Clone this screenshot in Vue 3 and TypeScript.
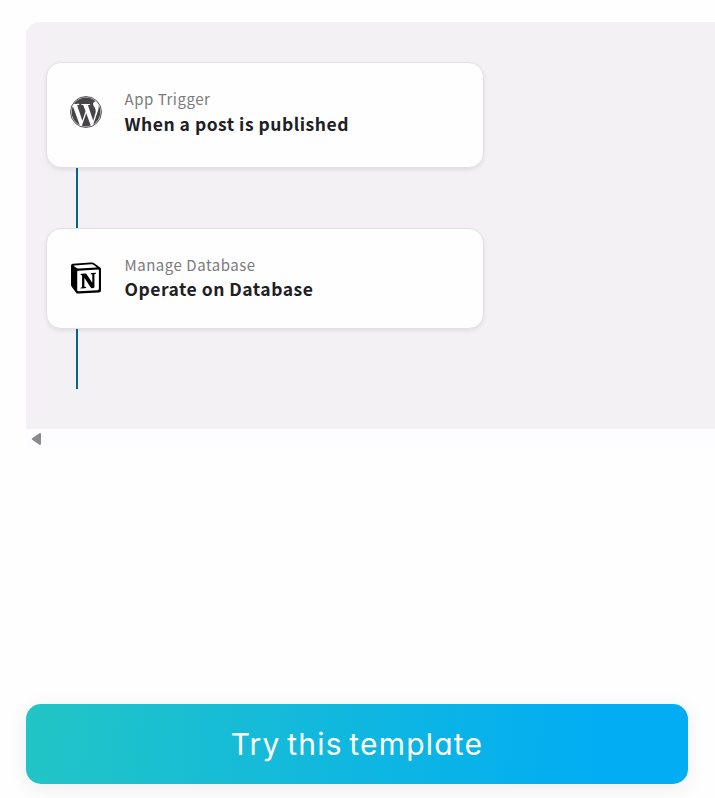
<script setup lang="ts">
interface Step {
  kind: 'wordpress' | 'notion'
  label: string
  title: string
}

const steps: Step[] = [
  { kind: 'wordpress', label: 'App Trigger', title: 'When a post is published' },
  { kind: 'notion', label: 'Manage Database', title: 'Operate on Database' },
]
</script>

<template>
  <main class="page">
    <section class="flow">
      <div v-for="step in steps" :key="step.kind" class="step">
        <article class="card" :class="step.kind">
          <svg v-if="step.kind === 'wordpress'" class="icon" viewBox="0 0 24 24" fill="#464446">
            <circle cx="12" cy="12" r="11.6" fill="none" stroke="#464446" stroke-width=".7" />
            <path d="M21.469 6.825c.84 1.537 1.318 3.3 1.318 5.175 0 3.979-2.156 7.456-5.363 9.325l3.295-9.527c.615-1.54.82-2.771.82-3.864 0-.405-.026-.78-.07-1.11m-7.981.105c.647-.03 1.232-.105 1.232-.105.582-.075.514-.93-.067-.899 0 0-1.755.135-2.88.135-1.064 0-2.85-.15-2.85-.15-.585-.03-.661.855-.075.885 0 0 .54.061 1.125.09l1.68 4.605-2.37 7.08L5.354 6.9c.649-.03 1.234-.1 1.234-.1.585-.075.516-.93-.065-.896 0 0-1.746.138-2.874.138-.2 0-.438-.008-.69-.015C4.911 3.15 8.235 1.215 12 1.215c2.809 0 5.365 1.072 7.286 2.833-.046-.003-.091-.009-.141-.009-1.06 0-1.812.923-1.812 1.914 0 .89.513 1.643 1.06 2.531.411.72.89 1.643.89 2.977 0 .915-.354 1.994-.821 3.479l-1.075 3.585-3.9-11.61zM12 22.784c-1.059 0-2.081-.153-3.048-.437l3.237-9.406 3.315 9.087c.024.053.05.101.078.149-1.12.393-2.325.609-3.582.609M1.211 12c0-1.564.336-3.05.935-4.39L7.29 21.709C3.694 19.96 1.212 16.271 1.211 12" />
          </svg>
          <svg v-else class="icon" viewBox="-.3 0 24.6 24" fill="#000">
            <path fill-rule="evenodd" d="M4.459 4.208c.746.606 1.026.56 2.428.466l13.215-.793c.28 0 .047-.28-.046-.326L17.86 1.968c-.42-.326-.981-.7-2.055-.607L3.01 2.295c-.466.046-.56.28-.374.466zm.793 3.08v13.904c0 .747.373 1.027 1.214.98l14.523-.84c.841-.046.935-.56.935-1.167V6.354c0-.606-.233-.933-.748-.887l-15.177.887c-.56.047-.747.327-.747.933zm14.337.745c.093.42 0 .84-.42.888l-.7.14v10.264c-.608.327-1.168.514-1.635.514-.748 0-.935-.234-1.495-.933l-4.577-7.186v6.952L12.21 19s0 .84-1.168.84l-3.222.186c-.093-.186 0-.653.327-.746l.84-.233V9.854L7.822 9.76c-.094-.42.14-1.026.793-1.073l3.456-.233 4.764 7.279v-6.44l-1.215-.139c-.093-.514.28-.887.747-.933zM1.936 1.035l13.31-.98c1.634-.14 2.055-.047 3.082.7l4.249 2.986c.7.513.934.653.934 1.213v16.378c0 1.026-.373 1.634-1.68 1.726l-15.458.934c-.98.047-1.448-.093-1.962-.747l-3.129-4.06c-.56-.747-.793-1.306-.793-1.96V2.667c0-.839.374-1.54 1.447-1.632z" />
          </svg>
          <div class="copy">
            <span class="label">{{ step.label }}</span>
            <strong class="title">{{ step.title }}</strong>
          </div>
        </article>
        <div class="connector"></div>
      </div>
    </section>
    <div class="scrollbar">
      <svg class="arrow" width="11" height="14" viewBox="0 0 11 14">
        <path d="M9 2 1.8 7 9 12Z" fill="#8b898c" stroke="#8b898c" stroke-width="2" stroke-linejoin="round" />
      </svg>
    </div>
    <button class="cta" type="button">Try this template</button>
  </main>
</template>

<style>
body {
  margin: 0;
  background: #fefefe;
}
</style>

<style scoped>
.page {
  box-sizing: border-box;
  height: 798px;
  padding: 22px 0 14px 26px;
  display: flex;
  flex-direction: column;
  overflow: hidden;
  font-family: "Noto Sans CJK SC", "Noto Sans", sans-serif;
}
.flow {
  box-sizing: border-box;
  height: 407px;
  padding: 40px 20px;
  background: #f3f1f4;
  border-radius: 14px 0 0 0;
}
.card {
  box-sizing: border-box;
  width: 438px;
  display: flex;
  gap: 22.5px;
  padding-left: 23px;
  background: #fefefe;
  border: 1px solid #e2e0e4;
  border-radius: 15px;
  box-shadow: 0 2px 4px rgba(0, 0, 0, .08);
}
.wordpress {
  height: 106px;
}
.notion {
  height: 101px;
}
.icon {
  width: 32px;
  height: 32px;
  margin-top: 33px;
}
.copy {
  display: flex;
  flex-direction: column;
  padding-top: 23px;
}
.label {
  font-size: 15px;
  line-height: 25px;
  letter-spacing: .53px;
  color: #7c7a7d;
}
.title {
  font-size: 17.5px;
  line-height: 25px;
  font-weight: 700;
  letter-spacing: .5px;
  color: #202023;
}
.notion .title {
  line-height: 24px;
}
.connector {
  width: 2px;
  height: 60px;
  margin-left: 30px;
  background: #07638b;
}
.scrollbar {
  height: 19px;
  padding: 3px 0 0 5px;
  box-sizing: border-box;
  background: #fdfcfe;
}
.arrow {
  display: block;
}
.cta {
  width: 662px;
  height: 80px;
  margin-top: auto;
  padding: 0;
  border: 0;
  border-radius: 15px;
  background: linear-gradient(94deg, #22c5c5, #02adf3 86%);
  box-shadow: 0 4px 20px rgba(40, 20, 60, .08);
  color: #fff;
  font-family: Inter, "Open Sans", sans-serif;
  font-feature-settings: "cv11";
  font-size: 30px;
  line-height: 80px;
  letter-spacing: 1.2px;
  word-spacing: -3px;
}
</style>
